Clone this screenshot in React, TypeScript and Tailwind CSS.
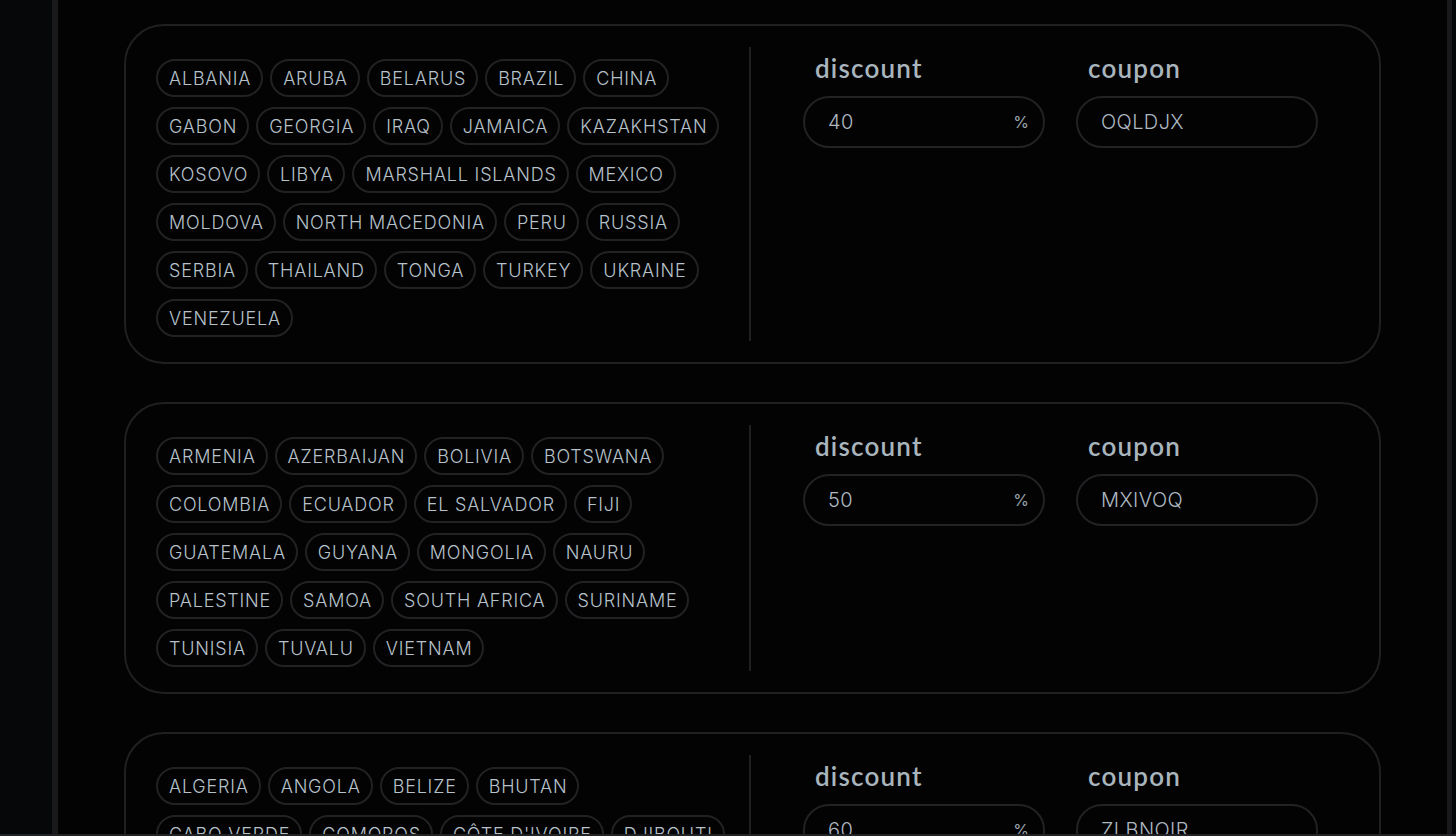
import React from "react";

type Card = { rows: string[][]; discount: string; coupon: string };

const cards: Card[] = [
  {
    rows: [
      ["ALBANIA", "ARUBA", "BELARUS", "BRAZIL", "CHINA"],
      ["GABON", "GEORGIA", "IRAQ", "JAMAICA", "KAZAKHSTAN"],
      ["KOSOVO", "LIBYA", "MARSHALL ISLANDS", "MEXICO"],
      ["MOLDOVA", "NORTH MACEDONIA", "PERU", "RUSSIA"],
      ["SERBIA", "THAILAND", "TONGA", "TURKEY", "UKRAINE"],
      ["VENEZUELA"],
    ],
    discount: "40",
    coupon: "OQLDJX",
  },
  {
    rows: [
      ["ARMENIA", "AZERBAIJAN", "BOLIVIA", "BOTSWANA"],
      ["COLOMBIA", "ECUADOR", "EL SALVADOR", "FIJI"],
      ["GUATEMALA", "GUYANA", "MONGOLIA", "NAURU"],
      ["PALESTINE", "SAMOA", "SOUTH AFRICA", "SURINAME"],
      ["TUNISIA", "TUVALU", "VIETNAM"],
    ],
    discount: "50",
    coupon: "MXIVOQ",
  },
  {
    rows: [
      ["ALGERIA", "ANGOLA", "BELIZE", "BHUTAN"],
      ["CABO VERDE", "COMOROS", "CÔTE D'IVOIRE", "DJIBOUTI"],
      ["EGYPT", "ESWATINI", "GHANA", "HONDURAS"],
    ],
    discount: "60",
    coupon: "ZLBNOIR",
  },
];

const chipFont = { fontFamily: "Inter, 'Noto Sans', sans-serif" };
const labelFont = { fontFamily: "Lato, 'Noto Sans', sans-serif" };

function Chip({ name }: { name: string }) {
  return (
    <div
      className="h-[38px] flex items-center pl-[11px] pr-[10px] rounded-full border-2 border-[#212224] text-[18px] font-light text-[#b6c1ca] whitespace-nowrap tracking-[0.8px]"
      style={chipFont}
    >
      {name}
    </div>
  );
}

function Field({ label, value, suffix }: { label: string; value: string; suffix?: string }) {
  return (
    <div className="w-[242px] flex flex-col">
      <div
        className="pl-[12px] h-[34px] text-[26px] font-semibold text-[#a9b5bd] leading-[34px] tracking-[1.2px]"
        style={labelFont}
      >
        {label}
      </div>
      <div className="mt-[11px] h-[52px] rounded-full border-2 border-[#212224] flex items-center pl-[23px] pr-[14px]">
        <span className="flex-1 text-[20px] font-light text-[#aeb9c2] tracking-[0.4px]" style={chipFont}>
          {value}
        </span>
        {suffix && (
          <span className="text-[16px] text-[#9aa6ae]" style={chipFont}>
            {suffix}
          </span>
        )}
      </div>
    </div>
  );
}

function CardView({ card }: { card: Card }) {
  return (
    <div className="shrink-0 rounded-[40px] border-2 border-[#1f2022] bg-[#030304] px-[30px] py-[21px] flex">
      <div className="w-[595px] pt-[12px] pb-[4px] flex flex-col gap-[10px] border-r-2 border-[#1f2022]">
        {card.rows.map((row, i) => (
          <div key={i} className="flex gap-[7px]">
            {row.map((c) => (
              <Chip key={c} name={c} />
            ))}
          </div>
        ))}
      </div>
      <div className="pl-[52px] pt-[4px] flex gap-[31px]">
        <Field label="discount" value={card.discount} suffix="%" />
        <Field label="coupon" value={card.coupon} />
      </div>
    </div>
  );
}

export default function App() {
  return (
    <div className="w-[1456px] h-[836px] overflow-hidden flex flex-col bg-[#07080a]">
      <div className="flex-1 min-h-0 flex">
        <div className="w-[52px] bg-[#060709]" />
        <div className="w-[6px] bg-[#19191b]" />
        <div className="flex-1 bg-[#030304] overflow-hidden px-[66px] pt-[24px] flex flex-col gap-[38px]">
          {cards.map((c, i) => (
            <CardView key={i} card={c} />
          ))}
        </div>
        <div className="w-[5px] bg-[#19191b]" />
        <div className="w-[4px] bg-[#060709]" />
      </div>
      <div className="h-[2px] bg-[#222325]" />
    </div>
  );
}
